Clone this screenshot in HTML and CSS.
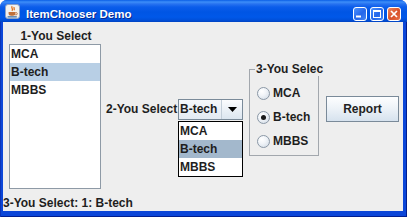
FILE: index.html
```html
<!DOCTYPE html>
<html>
<head>
<meta charset="utf-8">
<link rel="stylesheet" href="styles.css">
</head>
<body>
<div class="window">
  <div class="titlebar">
    <svg class="app-icon" width="15" height="15" viewBox="0 0 15 15">
      <rect x="0.5" y="0.5" width="14" height="14" rx="2.5" fill="#f4f2ee" stroke="#8fa2c4"/>
      <path d="M7.2 2.2 C5.6 3.6 8.6 4.6 7 6.8 M9.2 3 C8.4 4 9.9 4.8 9 6.2" stroke="#e06a10" stroke-width="1.2" fill="none"/>
      <path d="M3.6 8 H10.4 V9.6 C10.4 11 9.2 11.8 7.8 11.8 H6.2 C4.8 11.8 3.6 11 3.6 9.6 Z" fill="#c0703a"/>
      <path d="M10.4 8.6 H11.2 A1.1 1.1 0 0 1 11.2 10.8 H10.2" stroke="#c0703a" stroke-width="0.9" fill="none"/>
      <path d="M2.6 12.9 H11.8" stroke="#3a6ea5" stroke-width="1.2"/>
    </svg>
    <span class="title">ItemChooser Demo</span>
    <div class="tb-buttons">
      <svg class="tb-btn" width="14" height="14" viewBox="0 0 14 14">
        <defs>
          <linearGradient id="gb" x1="0" y1="0" x2="1" y2="1">
            <stop offset="0" stop-color="#4f95ff"/>
            <stop offset="0.55" stop-color="#2466ea"/>
            <stop offset="1" stop-color="#4c8cf6"/>
          </linearGradient>
          <linearGradient id="gr" x1="0" y1="0" x2="1" y2="1">
            <stop offset="0" stop-color="#f08a62"/>
            <stop offset="0.55" stop-color="#d8512a"/>
            <stop offset="1" stop-color="#e9734c"/>
          </linearGradient>
        </defs>
        <rect x="0.5" y="0.5" width="13" height="13" rx="2.5" fill="url(#gb)" stroke="#ffffff"/>
        <rect x="3" y="8.5" width="5" height="2" fill="#ffffff"/>
      </svg>
      <svg class="tb-btn" width="14" height="14" viewBox="0 0 14 14">
        <rect x="0.5" y="0.5" width="13" height="13" rx="2.5" fill="url(#gb)" stroke="#ffffff"/>
        <rect x="3.5" y="3.5" width="7" height="7" fill="none" stroke="#ffffff"/>
        <rect x="3" y="3" width="8" height="2" fill="#ffffff"/>
      </svg>
      <svg class="tb-btn close" width="14" height="14" viewBox="0 0 14 14">
        <rect x="0.5" y="0.5" width="13" height="13" rx="2.5" fill="url(#gr)" stroke="#ffffff"/>
        <path d="M4 4 L10 10 M10 4 L4 10" stroke="#ffffff" stroke-width="1.7"/>
      </svg>
    </div>
  </div>
  <div class="frame">
    <div class="content">
      <div class="main-row">
        <div class="col1">
          <div class="lbl1">1-You Select</div>
          <div class="list">
            <div class="item">MCA</div>
            <div class="item sel">B-tech</div>
            <div class="item">MBBS</div>
          </div>
        </div>
        <div class="lbl2">2-You Select</div>
        <div class="combo-wrap">
          <div class="combo">
            <span class="combo-text">B-tech</span>
            <span class="combo-btn">
              <svg width="9" height="5" viewBox="0 0 9 5"><path d="M0 0 H9 L4.5 5 Z" fill="#000"/></svg>
            </span>
          </div>
          <div class="popup">
            <div class="pitem">MCA</div>
            <div class="pitem hl">B-tech</div>
            <div class="pitem">MBBS</div>
          </div>
        </div>
        <fieldset class="group">
          <legend>3-You Selec</legend>
          <div class="radio-row"><span class="radio"></span><span>MCA</span></div>
          <div class="radio-row"><span class="radio on"></span><span>B-tech</span></div>
          <div class="radio-row"><span class="radio"></span><span>MBBS</span></div>
        </fieldset>
        <button class="report">Report</button>
      </div>
      <div class="status">3-You Select: 1: B-tech</div>
    </div>
  </div>
</div>
</body>
</html>
```
FILE: styles.css
```css
* { box-sizing: border-box; }
body {
  margin: 0;
  background: #ffffff;
  font-family: "Liberation Sans", Arial, sans-serif;
}
.window {
  width: 407px;
  height: 217px;
  display: flex;
  flex-direction: column;
  border-radius: 7px 7px 0 0;
  overflow: hidden;
  background: #0b46d8;
}
.titlebar {
  flex: none;
  height: 22px;
  display: flex;
  align-items: flex-start;
  padding-left: 5px;
  background: linear-gradient(180deg, #0a5ee6 0px, #3d8ef9 2px, #2772f0 4px, #0b5deb 7px, #0055e4 12px, #0058e9 17px, #0050da 20px, #0043c2 22px);
}
.app-icon { margin-top: 4px; flex: none; }
.title {
  margin-left: 6px;
  margin-top: 7px;
  color: #ffffff;
  font-weight: bold;
  font-size: 11.5px;
  line-height: 14px;
  text-shadow: 1px 1px 0 #0a2a8c;
}
.tb-buttons {
  margin-left: auto;
  margin-right: 6px;
  margin-top: 7px;
  display: flex;
  gap: 3px;
}
.tb-btn { display: block; }
.frame {
  flex: 1;
  display: flex;
  padding: 0 4px 6px 3px;
  background: #0b46d8;
  box-shadow: inset 1px 0 0 #0a34b8, inset -1px 0 0 #001e90, inset 0 -1px 0 #001e90;
}
.content {
  flex: 1;
  background: #eeeeee;
  display: flex;
  flex-direction: column;
  font-weight: bold;
  font-size: 12px;
  color: #1e1e1e;
}
.main-row {
  display: flex;
  align-items: center;
  height: 167px;
  flex: none;
  padding-top: 7px;
  padding-left: 6px;
}
.col1 {
  width: 92px;
  flex: none;
  display: flex;
  flex-direction: column;
}
.lbl1 {
  height: 15px;
  line-height: 15px;
  text-align: center;
  padding-left: 2px;
}
.list {
  height: 145px;
  background: #ffffff;
  border: 1px solid #8e9aa6;
}
.item {
  height: 18px;
  line-height: 18px;
  padding-left: 1px;
}
.item.sel { background: #b8cfe5; }
.lbl2 {
  flex: none;
  width: 72px;
  margin-left: 5px;
  white-space: nowrap;
}
.combo-wrap {
  position: relative;
  flex: none;
  width: 65px;
  height: 21px;
}
.combo {
  display: flex;
  height: 21px;
  border: 1px solid #7a8a99;
  background: linear-gradient(180deg, #f6f8fb, #e3eaf2);
}
.combo-text {
  flex: 1;
  line-height: 19px;
  padding-left: 1px;
}
.combo-btn {
  width: 21px;
  display: flex;
  align-items: center;
  justify-content: center;
  border-left: 1px solid #c3ced9;
  background: linear-gradient(180deg, #fbfcfe, #dce6f0);
}
.combo-btn svg { display: block; margin-top: 1px; }
.popup {
  position: absolute;
  left: 0;
  top: 22px;
  width: 65px;
  border: 1px solid #000000;
  background: #ffffff;
  z-index: 2;
}
.pitem {
  height: 18px;
  line-height: 18px;
  padding-left: 1px;
}
.pitem.hl { background: #a3b8cc; }
.group {
  flex: none;
  width: 70px;
  min-width: 0;
  margin: 0 0 0 6px;
  padding: 5px 0 2px 0;
  border: 1px solid #a2a7ad;
}
.group legend {
  margin-left: 5px;
  padding: 0 0 0 1px;
  line-height: 14px;
  white-space: nowrap;
}
.radio-row {
  display: flex;
  align-items: center;
  gap: 3px;
  height: 24px;
  padding-left: 7px;
  white-space: nowrap;
}
.radio {
  position: relative;
  width: 13px;
  height: 13px;
  flex: none;
  border-radius: 50%;
  border: 1px solid #8b98a6;
  background: radial-gradient(circle at 35% 30%, #ffffff 0%, #f1f4f8 40%, #cfd9e4 100%);
}
.radio.on::after {
  content: "";
  position: absolute;
  left: 3px;
  top: 3px;
  width: 5px;
  height: 5px;
  border-radius: 50%;
  background: #1a1a1a;
}
.report {
  flex: none;
  width: 73px;
  height: 26px;
  margin-left: 7px;
  padding: 0;
  border: 1px solid #7a8a99;
  background: linear-gradient(180deg, #fdfeff 0%, #eef3f8 45%, #d6e2ee 100%);
  font-family: "Liberation Sans", Arial, sans-serif;
  font-weight: bold;
  font-size: 12px;
  color: #222222;
}
.status {
  flex: none;
  margin-top: 7px;
  line-height: 15px;
  height: 15px;
  white-space: nowrap;
}
```
